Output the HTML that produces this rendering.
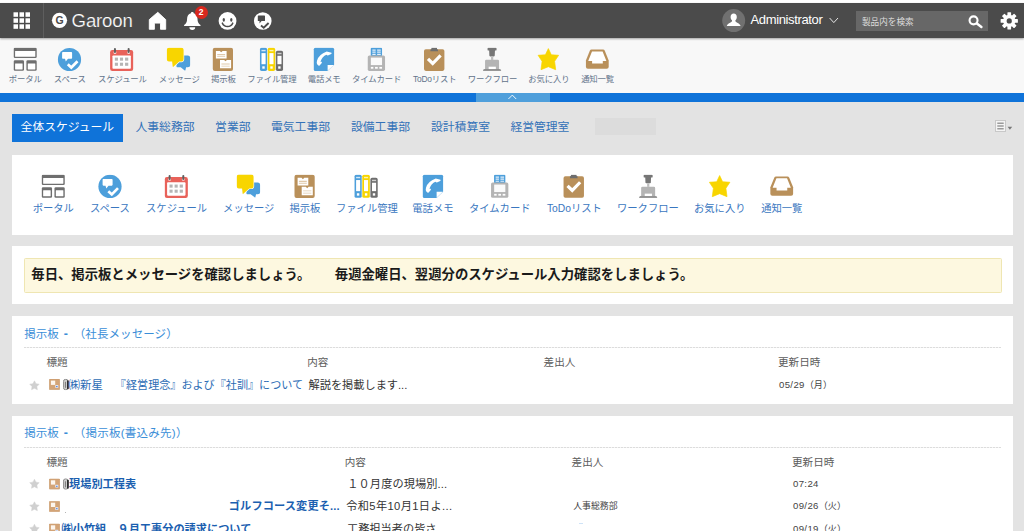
<!DOCTYPE html>
<html lang="ja">
<head>
<meta charset="utf-8">
<title>Garoon</title>
<style>
*{box-sizing:border-box;margin:0;padding:0}
html,body{width:1024px;height:531px;overflow:hidden}
body{background:#e3e3e3;font-family:"Liberation Sans","Noto Sans CJK JP",sans-serif;color:#333;position:relative}
.abs{position:absolute}
#topline{left:0;top:0;width:1024px;height:3px;background:#fff}
#hdr{left:0;top:3px;width:1024px;height:35px;background:#4b4b4b;box-shadow:0 1px 2px rgba(0,0,0,.35);z-index:5}
#hdr .div{left:43px;top:0;width:1px;height:35px;background:#5e5e5e}
#brand{left:71.600px;top:5.700px;font-size:18.600px;line-height:24px;color:#fff;letter-spacing:-.17px;-webkit-text-stroke:.22px #4b4b4b}
#adm{left:750.500px;top:8px;font-size:13px;line-height:18px;color:#fff;letter-spacing:-.36px}
#sbox{left:856px;top:8px;width:132px;height:20px;background:#676767}
#sbox span{position:absolute;left:6px;top:4px;font-size:8.6px;line-height:14px;color:#dcdcdc;white-space:nowrap}
#badge{left:194.600px;top:3.300px;width:13px;height:13px;border-radius:6.500px;background:#d9281e;color:#fff;font-size:8.500px;font-weight:bold;line-height:13px;text-align:center}
#tb{left:0;top:38px;width:1024px;height:55px;background:#f8f8f8}
#bluebar{left:0;top:93px;width:1024px;height:9px;background:#0f73d9}
#handle{left:476px;top:93px;width:74px;height:9px;background:#4f9fdb}
.it{position:absolute;width:120px;margin-left:-60px;text-align:center;white-space:nowrap}
.it svg{display:block;margin:0 auto;width:24px;height:24px;overflow:visible}
#tb .it{top:9px}
#tb .it span{display:block;position:relative;margin-top:2.25px;font-size:8.4px;line-height:12px;color:#62738a;letter-spacing:-.15px}
#tabs{left:12px;top:114px;height:28px;white-space:nowrap}
.tab{position:absolute;top:0;height:28px;line-height:27px;font-size:11.8px;color:#2d6db4;white-space:nowrap}
.tab.on{left:0;width:111px;background:#0f73d9;color:#fff;text-align:center}
.panel{left:12.300px;width:1000.600px;background:#fff}
#p1 .it{top:19px}
#p1 .it span{display:block;position:relative;margin-top:3.8px;font-size:10.3px;line-height:14px;color:#3a77c0}

.t{position:absolute;white-space:nowrap;line-height:16px;height:16px;margin-top:-8px}
#tabsx .t{font-size:11.8px;color:#3472b8}
#note{left:24px;top:257.700px;width:977.500px;height:35.200px;background:#fdf8e0;border:1px solid #efe6b2;border-radius:1.500px}
.b13{font-size:13.35px;font-weight:bold;color:#1a1a1a}
.ttl{font-size:11.5px;color:#3a8ed8}
.ds{position:relative;top:0px;left:1.200px;font-size:12.500px}
.t2{position:relative;left:3.2px;letter-spacing:.25px}
.ttl{word-spacing:.6px}
.dot{position:absolute;left:24px;width:977px;height:1px;background:repeating-linear-gradient(90deg,#dcdcdc 0,#dcdcdc 2px,#f4f4f4 2px,#f4f4f4 3px)}
.th{font-size:10.6px;color:#5c5c5c}
.lk{font-size:11.2px;color:#2c6cb5}
.lkb{font-size:11.2px;color:#1b5fb0;font-weight:bold}
.tx{font-size:11.2px;color:#333}
.dt{font-size:9.6px;color:#444;letter-spacing:.35px}
.dt i{font-style:normal;font-size:9.1px;letter-spacing:0}
.sm{font-size:8.9px;color:#444}
.ic{position:absolute;overflow:visible}
</style>
</head>
<body>
<svg width="0" height="0" style="position:absolute">
<defs>
<symbol id="i-portal" viewBox="0 0 24 24">
<rect x=".5" y=".2" width="23" height="10.400" rx="1.300" fill="#6e6e6e"/><rect x="1.900" y="3.600" width="20.200" height="5.600" rx=".3" fill="#fff"/>
<rect x=".5" y="12.700" width="10.300" height="10.600" rx="1.300" fill="#6e6e6e"/><rect x="1.900" y="15.900" width="7.500" height="6" rx=".3" fill="#fff"/>
<rect x="13.200" y="12.700" width="10.300" height="10.600" rx="1.300" fill="#6e6e6e"/><rect x="14.600" y="15.900" width="7.500" height="6" rx=".3" fill="#fff"/>
</symbol>
<symbol id="i-space" viewBox="0 0 24 24">
<circle cx="12" cy="12" r="11.600" fill="#4d9fdb"/>
<path d="M5.400 4.600h8.400a.8.800 0 0 1 .8.800v5a.8.800 0 0 1-.8.800h-3.300L8.300 14.100 7.500 11.200H5.400a.8.800 0 0 1-.8-.8v-5a.8.800 0 0 1 .8-.8z" fill="#fff"/>
<path d="M10.300 16.700l3.500 3.300 6.200-6.300" fill="none" stroke="#fff" stroke-width="2.700"/>
</symbol>
<symbol id="i-sched" viewBox="0 0 24 24">
<rect x=".35" y="2.500" width="23.100" height="21" rx="2.200" fill="#e8625a"/>
<rect x="2.700" y="7.900" width="18.400" height="13.300" rx=".8" fill="#fff"/>
<g fill="#b5b5b5"><rect x="5.100" y="10.100" width="3.100" height="3.100"/><rect x="10.200" y="10.100" width="3.100" height="3.100"/><rect x="15.300" y="10.100" width="3.200" height="3.100"/><rect x="5.100" y="15.200" width="3.100" height="3.100"/><rect x="10.200" y="15.200" width="3.100" height="3.100"/><rect x="15.300" y="15.200" width="3.200" height="3.100"/></g>
<rect x="3.800" y="3.800" width="2.800" height="2.600" rx=".8" fill="#f7d9d6"/><rect x="17.500" y="3.800" width="2.800" height="2.600" rx=".8" fill="#f7d9d6"/>
<rect x="4.200" y=".5" width="2" height="5" rx="1" fill="#5f5f5f"/><rect x="17.900" y=".5" width="2" height="5" rx="1" fill="#5f5f5f"/>
</symbol>
<symbol id="i-msg" viewBox="0 0 24 24">
<path d="M12.500 7.950H21.200A2.500 2.500 0 0 1 23.700 10.450V17.250A2.500 2.500 0 0 1 21.200 19.750H19.600L18.900 22.800Q18.700 23.300 18.200 22.900L14.200 19.750H10.600Q9.800 19.750 10 19V10.450A2.500 2.500 0 0 1 12.500 7.950Z" fill="#4d9fdb"/>
<path d="M2.500.15h12.400a2.200 2.200 0 0 1 2.200 2.200v9.500a2.200 2.200 0 0 1-2.200 2.200h-2.200L6.900 19.300Q6.300 19.700 6.200 19L5.600 14.050h-3.100a2.200 2.200 0 0 1-2.200-2.200v-9.500a2.200 2.200 0 0 1 2.200-2.200z" fill="#f8d500" stroke="#fafafa" stroke-width="1.200" paint-order="stroke"/>
</symbol>
<symbol id="i-bbs" viewBox="0 0 24 24">
<rect x="1.900" y=".3" width="20.200" height="23.200" rx="2" fill="#b9905a"/>
<path d="M5 3.400h3.900l1.400 1.300 1.400-1.300h4V11.100H5z" fill="#fff"/><path d="M6.300 6.400h7.900v1.400H6.300zM6.300 8.800h7.900v.8H6.300z" fill="#e0c9aa"/>
<path d="M9.100 12.400h4.100l1.400 1.300 1.400-1.300h4.200v8.400H9.100z" fill="#fff"/><path d="M10.500 16.100h8.300v.8h-8.300zM10.500 18.200h8.300v.8h-8.300z" fill="#e0c9aa"/>
</symbol>
<symbol id="i-file" viewBox="0 0 24 24">
<rect x=".4" y=".2" width="7.200" height="23.200" rx="1.700" fill="#4d9fdb"/><rect x="2" y="5.600" width="4.100" height="11.100" fill="#fff"/><rect x="2" y="2.400" width="4.100" height="1.400" fill="#d3e8f7"/><rect x="2.800" y="18.800" width="2.400" height="2.400" fill="#fff"/>
<rect x="8.200" y=".2" width="7.500" height="23.200" rx="1.700" fill="#f8d500"/><rect x="9.900" y="5.600" width="4.100" height="11.100" fill="#fff"/><rect x="9.900" y="2.400" width="4.100" height="1.400" fill="#fdf3b0"/><rect x="10.800" y="18.800" width="2.400" height="2.400" fill="#fff"/>
<rect x="16.300" y="3.300" width="7.300" height="20.100" rx="1.700" fill="#6e6e6e"/><rect x="17.900" y="8.300" width="4.100" height="8.400" fill="#fff"/><rect x="17.900" y="5.300" width="4.100" height="1.400" fill="#d0d0d0"/><rect x="18.700" y="18.800" width="2.400" height="2.400" fill="#fff"/>
</symbol>
<symbol id="i-tel" viewBox="0 0 24 24">
<path d="M3.400.3h17.300a1.500 1.500 0 0 1 1.500 1.500v15.500l-6.600 6.200H3.400a1.500 1.500 0 0 1-1.500-1.500V1.800A1.500 1.500 0 0 1 3.400.3z" fill="#4d9fdb"/>
<path d="M15.700 17.400h6.300l-6.300 5.900z" fill="#fff"/>
<path d="M14.800 4.100L19.600 5.300Q20 6 19.300 6.600L16 8.100Q15 7.900 14.500 7.200Q10.500 8.500 8.500 14.200L9.700 14.300Q10.200 14.900 9.900 15.600L7.500 18.200Q6.300 18.200 5.600 17.300Q4.300 15.500 5.100 13.300Q6.800 7 14.800 4.100Z" fill="#fff"/>
</symbol>
<symbol id="i-time" viewBox="0 0 24 24">
<path d="M7.500.2h9.300a1 1 0 0 1 1 1V9H6.500V1.200a1 1 0 0 1 1-1z" fill="#4d9fdb"/>
<path d="M8.100 2h3.300v1.200H8.100zM12.900 2h3.600v1.200h-3.600zM8.100 4.100h3.300v1.200H8.100zM12.900 4.100h3.600v1.200h-3.600zM8.100 6.200h3.300v1.200H8.100zM12.900 6.200h3.600v1.200h-3.600z" fill="#e4f0fa"/>
<rect x="3.500" y="8" width="17.300" height="15.400" rx="1.600" fill="#b4b4b4"/>
<rect x="6.600" y="10.100" width="11.200" height="7.500" fill="#fafafa"/>
<rect x="6.600" y="19.400" width="2.500" height="1.800" fill="#fff"/><rect x="10.800" y="19.400" width="2.700" height="1.800" fill="#fff"/><rect x="15.100" y="19.400" width="2.700" height="1.800" fill="#fff"/>
</symbol>
<symbol id="i-todo" viewBox="0 0 24 24">
<rect x="1.800" y="1.700" width="20.400" height="21.700" rx="1.800" fill="#b9905a"/>
<path d="M9.400.2h5.200l.5 1.700h.7v1.800H8.200V1.900h.7z" fill="#6e6e6e"/>
<path d="M5.800 11.400l4.700 4.600 7.900-8.200" fill="none" stroke="#fff" stroke-width="3.200"/>
</symbol>
<symbol id="i-wf" viewBox="0 0 24 24">
<path d="M7.500 1.100a.9.900 0 0 1 .9-.9h7.200a.9.900 0 0 1 .9.900v1.100a.9.900 0 0 1-.9.900h-.7l-.2 5a.8.800 0 0 1-.8.800h-3.800a.8.800 0 0 1-.8-.8l-.2-5h-.7a.9.900 0 0 1-.9-.9z" fill="#767676"/>
<rect x="11" y="8.800" width="2.200" height="3.600" fill="#bdbdbd"/>
<path d="M6.300 12.200h11.400a1.300 1.300 0 0 1 1.300 1.300v8.400H5v-8.400a1.300 1.300 0 0 1 1.300-1.300z" fill="#b4b4b4"/>
<rect x="8.600" y="19.200" width="7.200" height="2.700" fill="#fff"/>
<path d="M3.700 21.800h16.600l.9 1.500H2.800z" fill="#767676"/>
</symbol>
<symbol id="i-fav" viewBox="0 0 24 24">
<path d="M11.95 1.100L14.900 7.300L22.200 7.800L18.200 13.800L19.300 22.200L11.950 19.200L4.600 22.200L5.700 13.800L1.700 7.800L9 7.300z" fill="#f8d500" stroke="#f8d500" stroke-width=".7" stroke-linejoin="round"/>
</symbol>
<symbol id="i-ntf" viewBox="0 0 24 24">
<path d="M6.300 2h11.400a2 2 0 0 1 1.800 1.200l3.900 9.700v6.400a2 2 0 0 1-2 2H2.600a2 2 0 0 1-2-2v-6.400l3.900-9.700A2 2 0 0 1 6.300 2z" fill="#b9905a"/>
<path d="M6.700 3.900h10.600l3.800 9.500h-3.600V16H6.800v-2.600H2.900z" fill="#fff"/>
</symbol>
<symbol id="i-star" viewBox="0 0 11 11"><path d="M5.50 0.55L7.00 3.44L10.21 3.97L7.93 6.29L8.41 9.50L5.50 8.05L2.59 9.50L3.07 6.29L0.79 3.97L4.00 3.44z" fill="#d0d0d0" stroke="#d0d0d0" stroke-width=".5" stroke-linejoin="round"/></symbol>
<symbol id="i-bi" viewBox="0 0 11 11"><rect x=".2" y=".2" width="10.600" height="10.600" rx=".8" fill="#d3a477" stroke="#c39263" stroke-width=".4"/><rect x="1.900" y="1.700" width="4.300" height="4.300" fill="#fdf6ee"/><rect x="6.300" y="6.200" width="3" height="2.700" fill="#e8eefc"/><rect x="7" y="7.200" width="1.600" height="1" fill="#4a7fe0"/></symbol>
<symbol id="i-clip" viewBox="0 0 6.200 11.500"><rect x=".5" y=".5" width="4.700" height="10.500" rx="2.300" fill="#cfcfcf" stroke="#8c8c8c" stroke-width="1"/><rect x="2" y="3" width="1" height="6" fill="#777"/><rect x="4.200" y="1.500" width="1.600" height="9" rx=".7" fill="#1e1e1e"/></symbol>
</defs>
</svg>

<div id="topline" class="abs"></div>
<div id="hdr" class="abs">
  <svg class="abs" style="left:13px;top:9px" width="18" height="18" viewBox="0 0 18 18"><g fill="#fff"><rect x=".5" y=".3" width="4.500" height="4.500"/><rect x="6.500" y=".3" width="4.500" height="4.500"/><rect x="12.500" y=".3" width="4.500" height="4.500"/><rect x=".5" y="6.300" width="4.500" height="4.500"/><rect x="6.500" y="6.300" width="4.500" height="4.500"/><rect x="12.500" y="6.300" width="4.500" height="4.500"/><rect x=".5" y="12.300" width="4.500" height="4.500"/><rect x="6.500" y="12.300" width="4.500" height="4.500"/><rect x="12.500" y="12.300" width="4.500" height="4.500"/></g></svg>
  <div class="abs div"></div>
  <svg class="abs" style="left:51px;top:9px" width="17" height="17" viewBox="0 0 17 17"><circle cx="8.500" cy="8.300" r="7.600" fill="#fff"/><text x="8.500" y="12.100" text-anchor="middle" font-family="Liberation Sans,sans-serif" font-weight="bold" font-size="10.500" fill="#4b4b4b">G</text></svg>
  <div id="brand" class="abs">Garoon</div>
  <svg class="abs" style="left:148px;top:8px" width="20" height="20" viewBox="0 0 20 20"><path d="M9.800 1.300L17.700 8.600V18.300H12.500V12.100H6.400V18.300H1.300V8.600z" fill="#fff" stroke="#fff" stroke-width=".9" stroke-linejoin="round"/></svg>
  <svg class="abs" style="left:183px;top:8px" width="19" height="20" viewBox="0 0 19 20"><path d="M9.300.9c.8 0 1.400.5 1.400 1.300 2.500.8 3.800 2.900 3.800 5.600 0 3.300.9 4.800 3 6.300v.9H1.100v-.9c2.100-1.500 3-3 3-6.300 0-2.700 1.300-4.800 3.800-5.600 0-.8.600-1.300 1.400-1.300z" fill="#fff"/><path d="M6.400 16.300h5.800a2.900 2.600 0 0 1-5.800 0z" fill="#fff"/></svg>
  <div id="badge" class="abs">2</div>
  <svg class="abs" style="left:218px;top:8px" width="19" height="20" viewBox="0 -.5 19 20"><circle cx="9.550" cy="9.450" r="8.900" fill="#fff"/><ellipse cx="5.800" cy="8.300" rx="1.150" ry="1.900" fill="#4b4b4b"/><ellipse cx="13.300" cy="8.300" rx="1.150" ry="1.900" fill="#4b4b4b"/><path d="M4.400 11.700c1 2.300 3 3.300 5.150 3.300s4.150-1 5.150-3.300" fill="none" stroke="#4b4b4b" stroke-width="1.600" stroke-linecap="round"/></svg>
  <svg class="abs" style="left:253px;top:8px" width="19" height="20" viewBox="0 -.5 19 20"><circle cx="9.750" cy="9.450" r="8.800" fill="#fff"/><path d="M5.400 4.100h6a.6.600 0 0 1 .6.600v4.300a.6.600 0 0 1-.6.600H8.600L6.500 11.900V9.600H5.400a.6.600 0 0 1-.6-.6V4.700a.6.600 0 0 1 .6-.6z" fill="#4b4b4b"/><path d="M8 14.100l2.700 2.100 4.900-4.700" fill="none" stroke="#4b4b4b" stroke-width="1.900"/></svg>
  <svg class="abs" style="left:722px;top:6px" width="24" height="24" viewBox="0 0 24 24"><circle cx="11.700" cy="11.600" r="11.500" fill="#707070"/><path d="M11.700 4.600c1.900 0 3.100 1.400 3.100 3.300 0 1.400-.6 2.600-1.400 3.300v1.100c0 .9 4.600 1.900 5.200 4.800H4.800c.6-2.900 5.200-3.900 5.200-4.800v-1.100c-.8-.7-1.400-1.900-1.400-3.300 0-1.900 1.200-3.300 3.100-3.300z" fill="#fff"/></svg>
  <div id="adm" class="abs">Administrator</div>
  <svg class="abs" style="left:829px;top:14px" width="10" height="7" viewBox="0 0 10 7"><path d="M.6 1l4.200 4.600L9 1" fill="none" stroke="#e6e6e6" stroke-width="1"/></svg>
  <div id="sbox" class="abs"><span>製品内を検索</span>
    <svg class="abs" style="left:111px;top:3px" width="17" height="16" viewBox="0 0 17 16"><circle cx="6.550" cy="6.350" r="4" fill="none" stroke="#fff" stroke-width="2.100"/><path d="M9.900 9.600l4.500 3.300" stroke="#fff" stroke-width="2.500" stroke-linecap="round"/></svg>
  </div>
  <svg class="abs" style="left:1000px;top:8px" width="19" height="20" viewBox="-9.250 -9.900 19 20"><g fill="#fff" transform="scale(.97)"><circle r="6.300"/><g id="gt"><rect x="-1.900" y="-8.900" width="3.800" height="17.800" rx=".6"/></g><use href="#gt" transform="rotate(45)"/><use href="#gt" transform="rotate(90)"/><use href="#gt" transform="rotate(135)"/></g><circle r="2.600" fill="#4b4b4b"/></svg>
</div>
<div id="tb" class="abs">
<div class="it" style="left:25px"><svg><use href="#i-portal" x="0.20" y="0.50"/></svg><span style="left:0.30px">ポータル</span></div>
<div class="it" style="left:70px"><svg><use href="#i-space" x="-0.50" y="0.50"/></svg><span style="left:-0.30px">スペース</span></div>
<div class="it" style="left:122px"><svg><use href="#i-sched" x="-0.25" y="0.50"/></svg><span style="left:0.45px">スケジュール</span></div>
<div class="it" style="left:178px"><svg><use href="#i-msg" x="0.50" y="0.50"/></svg><span style="left:1.30px">メッセージ</span></div>
<div class="it" style="left:223px"><svg><use href="#i-bbs" x="-0.10" y="0.50"/></svg><span style="left:0.40px">掲示板</span></div>
<div class="it" style="left:272px"><svg><use href="#i-file" x="-0.50" y="0.50"/></svg><span style="left:-0.10px">ファイル管理</span></div>
<div class="it" style="left:324px"><svg><use href="#i-tel" x="-0.10" y="0.50"/></svg><span style="left:0.15px">電話メモ</span></div>
<div class="it" style="left:376px"><svg><use href="#i-time" x="0.25" y="0.50"/></svg><span style="left:0.60px">タイムカード</span></div>
<div class="it" style="left:434px"><svg><use href="#i-todo" x="0.20" y="0.50"/></svg><span style="left:0.70px">ToDoリスト</span></div>
<div class="it" style="left:492px"><svg><use href="#i-wf" x="0.05" y="0.50"/></svg><span style="left:0.50px">ワークフロー</span></div>
<div class="it" style="left:548px"><svg><use href="#i-fav" x="0.40" y="0.50"/></svg><span style="left:0.90px">お気に入り</span></div>
<div class="it" style="left:597px"><svg><use href="#i-ntf" x="0.30" y="0.50"/></svg><span style="left:0.60px">通知一覧</span></div>
</div>
<div id="bluebar" class="abs"></div>
<div id="handle" class="abs"><svg class="abs" style="left:31px;top:1px" width="10" height="6" viewBox="-.3 0 10 6"><path d="M1.100 5L5 1.100 8.900 5" fill="none" stroke="#fff" stroke-opacity=".9" stroke-width="1"/></svg></div>
<div id="tabsx">
<div class="abs" style="left:12px;top:114px;width:111px;height:28px;background:#0f73d9"></div>
<div class="t" style="left:20.600px;top:127px;font-size:11.8px;color:#fff">全体スケジュール</div>
<div class="t" style="left:135.5px;top:127px">人事総務部</div>
<div class="t" style="left:215.1px;top:127px">営業部</div>
<div class="t" style="left:271px;top:127px">電気工事部</div>
<div class="t" style="left:351px;top:127px">設備工事部</div>
<div class="t" style="left:431px;top:127px">設計積算室</div>
<div class="t" style="left:510.4px;top:127px">経営管理室</div>
<div class="abs" style="left:595.200px;top:118.200px;width:61.200px;height:17px;background:#dcdcdc"></div>
<svg class="abs" style="left:995px;top:120px" width="18" height="12" viewBox="0 0 18 12"><rect x=".5" y=".5" width="10" height="11" fill="#f4f4f4" stroke="#c8c8c8"/><path d="M2.300 2.600h6.400v1.400H2.300zM2.300 5.300h6.400v1.400H2.300zM2.300 8h6.400v1.400H2.300z" fill="#9a9a9a"/><path d="M12.600 6.800l2.300 2.900 2.300-2.900z" fill="#777"/></svg>
</div>
<div class="abs panel" style="top:155px;height:79.5px"></div>
<div id="p1" class="abs" style="left:0;top:155px;width:1024px;height:79px">
<div class="it" style="left:53px"><svg><use href="#i-portal" x="0.25" y="0.45"/></svg><span style="left:0.25px">ポータル</span></div>
<div class="it" style="left:110px"><svg><use href="#i-space" x="0.00" y="0.45"/></svg><span style="left:-0.10px">スペース</span></div>
<div class="it" style="left:176px"><svg><use href="#i-sched" x="0.40" y="0.45"/></svg><span style="left:0.60px">スケジュール</span></div>
<div class="it" style="left:248px"><svg><use href="#i-msg" x="0.45" y="0.45"/></svg><span style="left:0.75px">メッセージ</span></div>
<div class="it" style="left:305px"><svg><use href="#i-bbs" x="-0.40" y="0.45"/></svg><span style="left:-0.10px">掲示板</span></div>
<div class="it" style="left:366px"><svg><use href="#i-file" x="0.10" y="0.45"/></svg><span style="left:0.90px">ファイル管理</span></div>
<div class="it" style="left:433px"><svg><use href="#i-tel" x="-0.10" y="0.45"/></svg><span style="left:-0.10px">電話メモ</span></div>
<div class="it" style="left:500px"><svg><use href="#i-time" x="-0.45" y="0.45"/></svg><span style="left:-0.30px">タイムカード</span></div>
<div class="it" style="left:574px"><svg><use href="#i-todo" x="-0.25" y="0.45"/></svg><span style="left:0.40px">ToDoリスト</span></div>
<div class="it" style="left:648px"><svg><use href="#i-wf" x="0.15" y="0.45"/></svg><span style="left:-0.10px">ワークフロー</span></div>
<div class="it" style="left:720px"><svg><use href="#i-fav" x="-0.30" y="0.45"/></svg><span style="left:-0.25px">お気に入り</span></div>
<div class="it" style="left:782px"><svg><use href="#i-ntf" x="-0.25" y="0.45"/></svg><span style="left:-0.25px">通知一覧</span></div>
</div>
<div class="abs panel" style="top:246px;height:58.300px"></div>
<div id="note" class="abs"></div>
<div class="t b13" style="left:31.300px;top:275.400px">毎日、掲示板とメッセージを確認しましょう。</div>
<div class="t b13" style="left:334.800px;top:275.400px">毎週金曜日、翌週分のスケジュール入力確認をしましょう。</div>
<div class="abs panel" style="top:316px;height:88px"></div>
<div class="t ttl" style="left:24.300px;top:333.600px">掲示板 <b class="ds">-</b> <span class="t2" style="letter-spacing:.08px">（社長メッセージ）</span></div>
<div class="dot" style="top:347px"></div>
<div class="t th" style="left:46.400px;top:362.300px">標題</div>
<div class="t th" style="left:307.200px;top:362.300px">内容</div>
<div class="t th" style="left:543.600px;top:362.300px">差出人</div>
<div class="t th" style="left:778px;top:362.300px">更新日時</div>
<svg class="ic" style="left:28px;top:380px" width="11" height="11"><use href="#i-star" x="0.95" y="0.20" width="11" height="11"/></svg>
<svg class="ic" style="left:49px;top:378px" width="11" height="11"><use href="#i-bi" x="0.00" y="0.90" width="11" height="11"/></svg>
<svg class="ic" style="left:62px;top:378px" width="7" height="12"><use href="#i-clip" x="0.90" y="0.80" width="6.2" height="11.5"/></svg>
<div class="t lk" style="left:68.600px;top:384.500px;font-size:11.5px">㈱新星</div>
<div class="t lk" style="left:114.850px;top:384.500px;font-size:11.1px">『経営理念』および『社訓』について</div>
<div class="t tx" style="left:308.500px;top:384.500px">解説を掲載します...</div>
<div class="t dt" style="left:779px;top:384.500px">05/29<i>（月）</i></div>
<div class="abs panel" style="top:415.500px;height:120px"></div>
<div class="t ttl" style="left:24.300px;top:433.400px">掲示板 <b class="ds">-</b> <span class="t2">（掲示板(書込み先)）</span></div>
<div class="dot" style="top:447px"></div>
<div class="t th" style="left:46.400px;top:461.500px">標題</div>
<div class="t th" style="left:344.700px;top:461.500px">内容</div>
<div class="t th" style="left:571.600px;top:461.500px">差出人</div>
<div class="t th" style="left:792px;top:461.500px">更新日時</div>
<svg class="ic" style="left:28px;top:478px" width="11" height="11"><use href="#i-star" x="0.95" y="0.70" width="11" height="11"/></svg>
<svg class="ic" style="left:49px;top:478px" width="11" height="11"><use href="#i-bi" x="0.00" y="0.60" width="11" height="11"/></svg>
<svg class="ic" style="left:62px;top:478px" width="7" height="12"><use href="#i-clip" x="0.90" y="0.30" width="6.2" height="11.5"/></svg>
<div class="t lkb" style="left:69px;top:483.600px">現場別工程表</div>
<div class="t tx" style="left:347.300px;top:483.600px;letter-spacing:.1px">１０月度の現場別...</div>
<div class="t dt" style="left:793px;top:483.600px">07:24</div>
<svg class="ic" style="left:28px;top:501px" width="11" height="11"><use href="#i-star" x="0.95" y="0.20" width="11" height="11"/></svg>
<svg class="ic" style="left:49px;top:501px" width="11" height="11"><use href="#i-bi" x="0.00" y="0.00" width="11" height="11"/></svg>
<div class="t lkb" style="left:228.800px;top:506.200px;letter-spacing:.12px">ゴルフコース変更そ...</div>
<div class="t tx" style="left:346.200px;top:506.200px;letter-spacing:.38px">令和5年10月1日よ...</div>
<div class="t sm" style="left:573.200px;top:506.300px">人事総務部</div>
<div class="t dt" style="left:793px;top:506.200px">09/26<i>（火）</i></div>
<svg class="ic" style="left:28px;top:523px" width="11" height="11"><use href="#i-star" x="0.95" y="0.70" width="11" height="11"/></svg>
<svg class="ic" style="left:49px;top:523px" width="11" height="11"><use href="#i-bi" x="0.00" y="0.60" width="11" height="11"/></svg>
<div class="t lkb" style="left:61.500px;top:528.800px">㈱小竹組　９月工事分の請求について</div>
<div class="t tx" style="left:347px;top:528.800px">工務担当者の皆さ</div>
<div class="t dt" style="left:793px;top:528.800px">09/19<i>（火）</i></div>
<div class="abs" style="left:578.500px;top:522.500px;width:4px;height:1.500px;background:#cfe3f7"></div>
<div class="abs" style="left:64.500px;top:511.500px;width:1.500px;height:1px;background:#b5b5b5"></div>
</body>
</html>
